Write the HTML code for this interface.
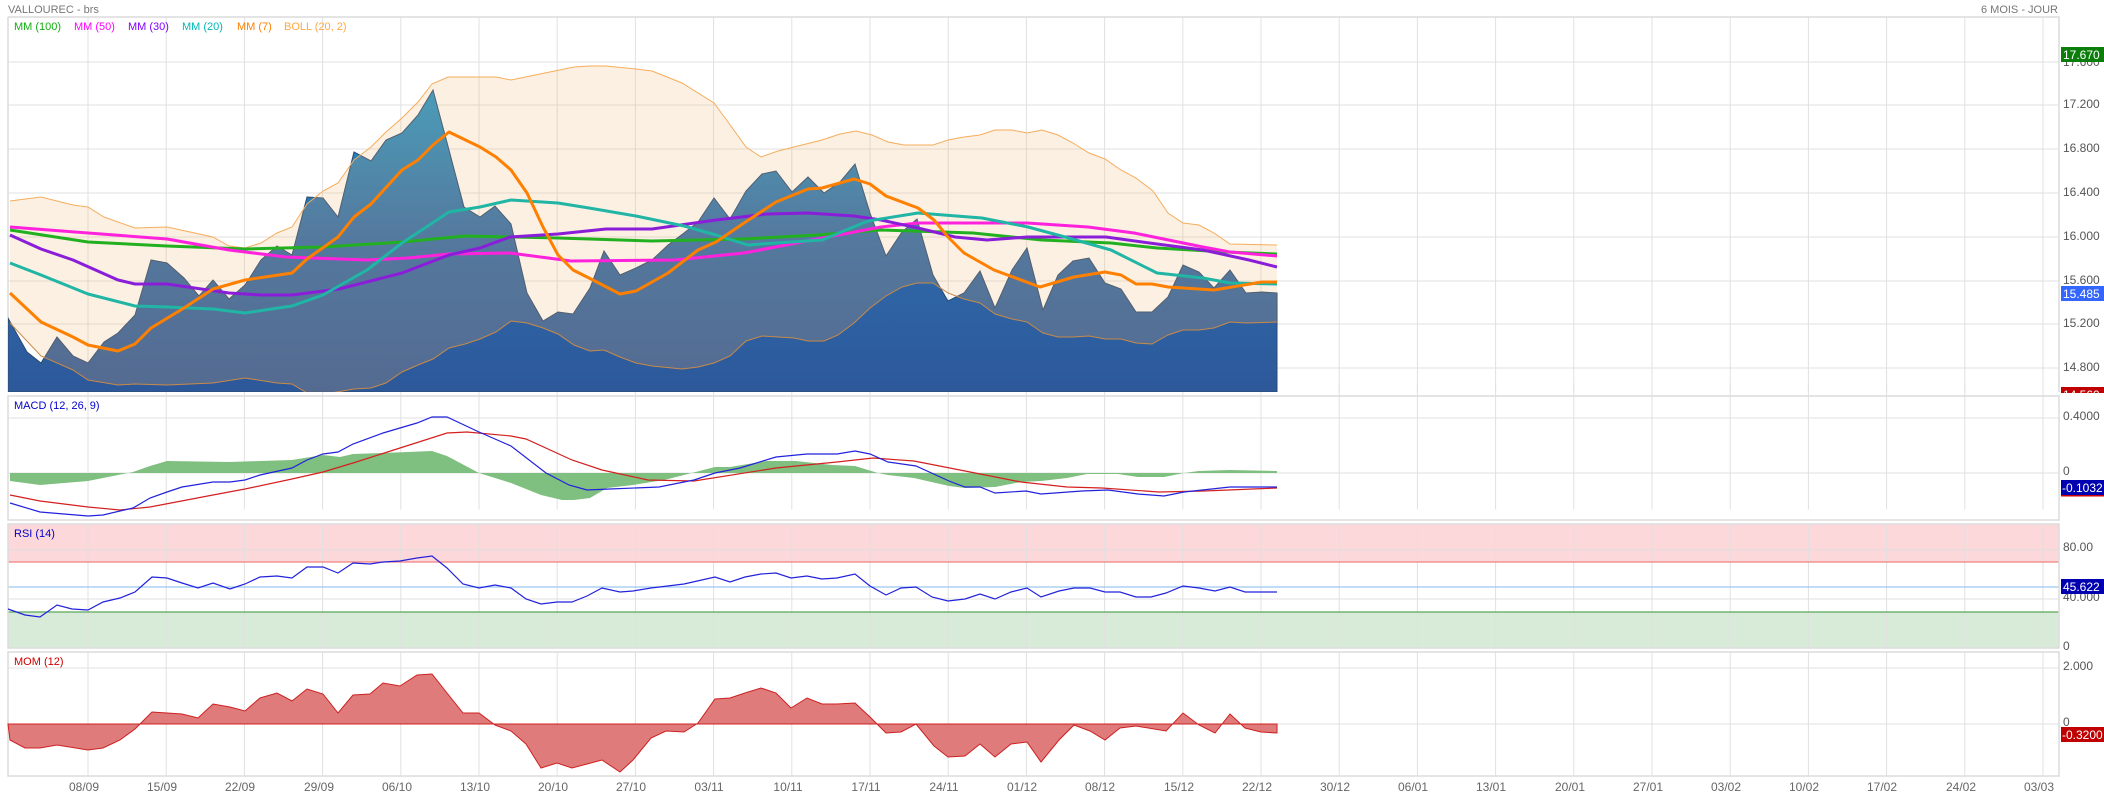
<!DOCTYPE html>
<html><head><meta charset="utf-8"><style>
html,body{margin:0;padding:0;background:#fff;}
svg{display:block;font-family:"Liberation Sans",Arial,sans-serif;}
</style></head><body>
<svg width="2104" height="797" viewBox="0 0 2104 797" xmlns="http://www.w3.org/2000/svg">
<defs>
<linearGradient id="pg" x1="0" y1="90" x2="0" y2="392" gradientUnits="userSpaceOnUse">
<stop offset="0" stop-color="#2196cb"/><stop offset="0.5" stop-color="#2e6aaa"/><stop offset="1" stop-color="#2d589a"/>
</linearGradient>
<clipPath id="cm"><rect x="8" y="17" width="2051" height="375"/></clipPath>
<clipPath id="cr"><rect x="2059" y="385" width="45" height="8"/></clipPath>
</defs>
<rect width="2104" height="797" fill="#fff"/>
<text x="8" y="13" font-size="11" fill="#777">VALLOUREC - brs</text>
<text x="2058" y="13" font-size="11" fill="#777" text-anchor="end">6 MOIS - JOUR</text>

<rect x="8" y="524" width="2051" height="38" fill="#fdd8da"/>
<rect x="8" y="612" width="2051" height="36" fill="#d8ebd8"/>

<g stroke="#e0e0e0" stroke-width="1">
<path d="M8 62H2059M8 105H2059M8 149H2059M8 193H2059M8 237H2059M8 281H2059M8 324H2059M8 368H2059"/>
<path d="M8 418H2059M8 473H2059M8 550H2059M8 599H2059M8 668H2059M8 724H2059"/>
<path id="vg" d="M88 17V392M166.2 17V392M244.4 17V392M322.6 17V392M400.8 17V392M479 17V392M557.2 17V392M635.4 17V392M713.6 17V392M791.8 17V392M870 17V392M948.2 17V392M1026.4 17V392M1104.6 17V392M1182.8 17V392M1261 17V392M1339.2 17V392M1417.4 17V392M1495.6 17V392M1573.8 17V392M1652 17V392M1730.2 17V392M1808.4 17V392M1886.6 17V392M1964.8 17V392M2043 17V392"/>
<use href="#vg" transform="translate(0,379) scale(1,0.333)"/>
<use href="#vg" transform="translate(0,518.3) scale(1,0.331)"/>
<use href="#vg" transform="translate(0,646.4) scale(1,0.331)"/>
</g>
<path d="M8 562H2059" stroke="#f08080" stroke-width="1.2"/>
<path d="M8 587H2059" stroke="#9cc8f0" stroke-width="1.2"/>
<path d="M8 612H2059" stroke="#5aa85a" stroke-width="1.2"/>

<g fill="none" stroke="#dcdcdc" stroke-width="1.5">
<path d="M8 17H2059V392M8 17V392"/>
<rect x="8" y="396" width="2051" height="124"/>
<rect x="8" y="524" width="2051" height="124"/>
<rect x="8" y="652" width="2051" height="124"/>
</g>

<g clip-path="url(#cm)">
<polygon fill="url(#pg)" stroke="#2b4a70" stroke-width="1" points="8,392 8,318 27,352 41,363 57,337 73,356 88,363 104,342 118,333 135,315 151,260 167,263 184,278 199,296 213,280 229,299 245,285 261,260 277,246 292,255 307,197 323,198 338,217 354,152 371,161 386,140 402,133 418,115 433,90 449,150 464,207 480,217 495,206 511,224 527,293 543,321 558,312 573,314 590,288 604,251 620,275 636,268 652,260 668,245 684,233 698,222 714,198 730,219 746,191 762,174 776,171 792,192 808,177 824,193 840,182 855,164 870,213 886,256 902,232 917,219 933,275 948,301 964,293 980,271 995,308 1012,270 1027,248 1043,310 1058,275 1073,261 1089,258 1105,283 1121,289 1136,312 1152,312 1168,297 1183,265 1199,272 1214,288 1230,270 1246,293 1262,292 1277,293 1277,392"/>
<polygon fill="rgb(240,180,110)" fill-opacity="0.2" points="10,201 41,197 73,205 88,207 104,217 135,228 167,227 213,237 229,246 245,248 261,243 277,233 292,227 307,204 323,191 338,183 354,160 371,147 386,132 402,118 418,102 432,84 448,77 496,77 511,80 540,74 574,67 589,66 606,66 636,69 652,71 682,83 714,103 728,122 746,147 761,157 778,151 822,140 840,134 856,131 872,135 888,142 904,145 933,145 948,140 964,137 980,135 995,130 1012,130 1027,133 1042,130 1058,135 1073,143 1089,153 1105,159 1121,170 1136,178 1153,191 1168,213 1183,223 1199,225 1214,233 1230,244 1277,245 1277,322 1246,323 1230,322 1214,328 1199,330 1183,330 1168,335 1152,344 1136,343 1121,339 1105,339 1089,336 1073,337 1058,337 1043,333 1027,322 1012,319 995,314 980,303 964,299 948,293 933,283 917,283 902,287 886,296 870,308 854,323 838,335 824,341 808,341 794,338 762,336 746,341 730,356 714,363 698,367 682,369 652,366 636,363 620,357 604,350 590,351 574,345 558,334 543,328 527,323 511,321 496,332 480,339 465,344 449,348 433,359 418,365 402,372 386,383 371,388 354,389 331,393 307,393 292,384 277,383 245,378 213,383 167,385 135,384 118,385 88,380 73,370 41,356 10,323"/>
<polyline fill="none" stroke="#f5ad5c" stroke-width="1" points="10,201 41,197 73,205 88,207 104,217 135,228 167,227 213,237 229,246 245,248 261,243 277,233 292,227 307,204 323,191 338,183 354,160 371,147 386,132 402,118 418,102 432,84 448,77 496,77 511,80 540,74 574,67 589,66 606,66 636,69 652,71 682,83 714,103 728,122 746,147 761,157 778,151 822,140 840,134 856,131 872,135 888,142 904,145 933,145 948,140 964,137 980,135 995,130 1012,130 1027,133 1042,130 1058,135 1073,143 1089,153 1105,159 1121,170 1136,178 1153,191 1168,213 1183,223 1199,225 1214,233 1230,244 1277,245"/>
<polyline fill="none" stroke="#c88a48" stroke-width="1" points="10,323 41,356 73,370 88,380 118,385 135,384 167,385 213,383 245,378 277,383 292,384 307,393 331,393 354,389 371,388 386,383 402,372 418,365 433,359 449,348 465,344 480,339 496,332 511,321 527,323 543,328 558,334 574,345 590,351 604,350 620,357 636,363 652,366 682,369 698,367 714,363 730,356 746,341 762,336 794,338 808,341 824,341 838,335 854,323 870,308 886,296 902,287 917,283 933,283 948,293 964,299 980,303 995,314 1012,319 1027,322 1043,333 1058,337 1073,337 1089,336 1105,339 1121,339 1136,343 1152,344 1168,335 1183,330 1199,330 1214,328 1230,322 1246,323 1277,322"/>
<g fill="none" stroke-width="3" stroke-linejoin="round">
<polyline stroke="#22b020" points="10,230 88,242 167,246 245,249 323,247 402,242 465,236 558,238 652,241 744,239 817,235 881,230 973,233 1042,240 1111,243 1157,248 1226,252 1277,254"/>
<polyline stroke="#ff22dd" points="10,227 88,233 167,239 229,250 286,257 367,260 408,258 449,254 510,253 571,261 675,260 744,253 812,240 881,227 918,223 1027,223 1088,227 1134,233 1203,247 1230,252 1277,256"/>
<polyline stroke="#8a1ed8" points="10,235 41,249 73,260 118,280 135,284 167,284 229,293 261,295 292,295 339,289 402,273 449,255 480,248 510,237 558,234 606,229 652,229 716,220 767,214 808,213 854,216 881,220 918,228 955,237 987,240 1027,237 1106,237 1157,244 1203,250 1249,260 1277,267"/>
<polyline stroke="#20b5a5" points="10,263 41,275 88,294 135,306 167,307 213,309 245,313 292,306 323,295 367,270 402,243 449,212 480,207 511,200 558,203 589,208 636,216 684,226 716,235 748,245 776,243 822,240 868,221 918,213 982,218 1028,227 1065,237 1111,250 1157,273 1203,278 1230,283 1277,284"/>
<polyline stroke="#ff8000" points="10,293 41,322 73,337 88,345 118,351 135,344 151,328 184,308 213,289 245,280 292,273 307,259 338,237 354,217 371,204 402,170 418,160 433,145 449,132 480,147 496,157 511,170 527,193 543,227 558,255 573,270 589,278 620,294 636,291 668,273 698,250 716,242 744,223 776,202 808,189 822,188 854,179 870,184 886,196 918,208 934,220 948,237 964,253 994,270 1040,287 1074,277 1105,272 1121,275 1136,284 1152,284 1168,287 1214,290 1262,282 1277,282"/>
</g>
</g>

<polygon fill="#7fbf7f" points="10,473 10,481 40,485 88,481 133,472 150,466 167,461 230,462 260,461 292,460 323,455 340,457 353,454 383,453 432,451 447,456 479,473 511,483 541,495 562,500 574,500 590,498 607,488 633,485 664,480 684,475 715,467 730,467 766,461 796,461 832,465 855,466 878,473 888,475 914,478 949,486 965,488 995,487 1021,482 1041,481 1067,478 1087,474 1118,474 1138,477 1164,477 1184,473 1199,471 1230,470 1277,471 1277,473"/>
<polyline fill="none" stroke="#d42020" stroke-width="1.2" points="10,495 40,501 88,507 120,510 150,507 213,495 245,489 292,479 323,472 353,463 400,448 447,433 467,432 511,436 526,439 572,460 602,470 648,480 694,481 776,468 837,462 873,458 914,461 965,471 1021,482 1067,487 1102,488 1159,492 1204,491 1277,488"/>
<polyline fill="none" stroke="#2222dd" stroke-width="1.2" points="10,503 40,512 88,516 103,515 133,508 150,498 167,492 182,487 213,482 230,482 245,480 260,475 292,468 307,460 323,454 338,452 353,444 383,433 417,423 432,417 447,417 479,432 511,446 546,473 569,485 587,490 610,489 659,487 694,480 715,473 740,468 776,457 807,454 837,454 855,451 870,454 888,462 916,466 949,481 965,487 980,487 995,493 1026,491 1041,494 1082,491 1108,490 1138,494 1164,496 1184,492 1230,487 1277,487"/>
<text x="14" y="409" font-size="11" fill="#0000cc">MACD (12, 26, 9)</text>

<polyline fill="none" stroke="#2222dd" stroke-width="1.2" points="8,609 25,615 40,617 57,605 72,609 88,610 103,602 120,598 135,592 152,577 167,578 182,583 198,588 213,583 230,589 245,584 260,577 277,576 292,578 307,567 323,567 338,573 353,563 370,564 383,562 400,561 417,558 432,556 447,568 463,584 479,588 495,585 511,588 526,599 541,604 557,602 572,602 587,596 602,588 620,592 633,591 651,588 684,584 715,577 730,582 745,577 761,574 776,573 791,578 807,576 822,579 837,578 855,574 870,586 886,595 901,588 916,587 932,597 948,601 965,599 980,594 995,599 1011,592 1027,588 1041,597 1059,591 1074,588 1090,588 1105,592 1120,592 1136,597 1151,597 1166,593 1183,586 1199,588 1215,591 1230,587 1245,592 1277,592"/>
<text x="14" y="537" font-size="11" fill="#0000cc">RSI (14)</text>

<polygon fill="#e07b7b" stroke="#cc2020" stroke-width="1" points="8,724 10,740 25,748 40,748 57,745 88,750 103,748 120,740 135,729 152,712 167,713 182,714 198,718 213,704 230,707 245,711 260,698 277,693 292,701 307,689 323,694 338,713 353,695 370,694 383,683 400,686 417,675 432,674 447,693 463,713 479,713 495,725 511,731 526,744 541,768 557,763 572,768 587,764 602,760 620,772 633,760 651,738 666,731 684,732 698,723 715,699 730,698 745,693 761,688 776,693 791,708 807,698 822,704 837,704 855,703 870,717 886,733 901,732 916,724 934,746 948,757 965,756 980,744 995,757 1011,744 1027,742 1041,762 1059,740 1074,725 1090,731 1105,740 1120,728 1136,726 1166,731 1183,713 1199,725 1215,733 1230,714 1245,728 1261,732 1277,733 1277,724"/>
<text x="14" y="665" font-size="11" fill="#cc0000">MOM (12)</text>

<g font-size="11">
<text x="14" y="30" fill="#10b010">MM (100)</text>
<text x="74" y="30" fill="#ff00ff">MM (50)</text>
<text x="128" y="30" fill="#8000ff">MM (30)</text>
<text x="182" y="30" fill="#00b8b8">MM (20)</text>
<text x="237" y="30" fill="#ff8000">MM (7)</text>
<text x="284" y="30" fill="#ffa840">BOLL (20, 2)</text>
</g>

<g font-size="12" fill="#555">
<text x="2063" y="66">17.600</text>
<text x="2063" y="108">17.200</text>
<text x="2063" y="152">16.800</text>
<text x="2063" y="196">16.400</text>
<text x="2063" y="240">16.000</text>
<text x="2063" y="284">15.600</text>
<text x="2063" y="327">15.200</text>
<text x="2063" y="371">14.800</text>
<text x="2063" y="420">0.4000</text>
<text x="2063" y="475">0</text>
<text x="2063" y="551">80.00</text>
<text x="2063" y="601">40.000</text>
<text x="2063" y="650">0</text>
<text x="2063" y="670">2.000</text>
<text x="2063" y="726">0</text>
</g>
<g font-size="12" fill="#fff">
<rect x="2061" y="47" width="43" height="15" fill="#0a7d0a"/><text x="2063" y="59">17.670</text>
<rect x="2061" y="286" width="43" height="15" fill="#3366ff"/><text x="2063" y="298">15.485</text>
<g clip-path="url(#cr)"><rect x="2061" y="387" width="43" height="15" fill="#c00000"/><text x="2063" y="399">14.560</text></g>
<rect x="2061" y="480" width="43" height="15" fill="#0000b0"/><rect x="2061" y="495" width="43" height="1.5" fill="#d00000"/><text x="2062" y="492">-0.1032</text>
<rect x="2061" y="579" width="43" height="15" fill="#0000b0"/><text x="2063" y="591">45.622</text>
<rect x="2061" y="727" width="43" height="15" fill="#c00000"/><text x="2062" y="739">-0.3200</text>
</g>

<g font-size="12" fill="#666" text-anchor="middle">
<text x="84" y="791">08/09</text><text x="162" y="791">15/09</text><text x="240" y="791">22/09</text><text x="319" y="791">29/09</text><text x="397" y="791">06/10</text><text x="475" y="791">13/10</text><text x="553" y="791">20/10</text><text x="631" y="791">27/10</text><text x="709" y="791">03/11</text><text x="788" y="791">10/11</text><text x="866" y="791">17/11</text><text x="944" y="791">24/11</text><text x="1022" y="791">01/12</text><text x="1100" y="791">08/12</text><text x="1179" y="791">15/12</text><text x="1257" y="791">22/12</text><text x="1335" y="791">30/12</text><text x="1413" y="791">06/01</text><text x="1491" y="791">13/01</text><text x="1570" y="791">20/01</text><text x="1648" y="791">27/01</text><text x="1726" y="791">03/02</text><text x="1804" y="791">10/02</text><text x="1882" y="791">17/02</text><text x="1961" y="791">24/02</text><text x="2039" y="791">03/03</text>
</g>
</svg>
</body></html>
